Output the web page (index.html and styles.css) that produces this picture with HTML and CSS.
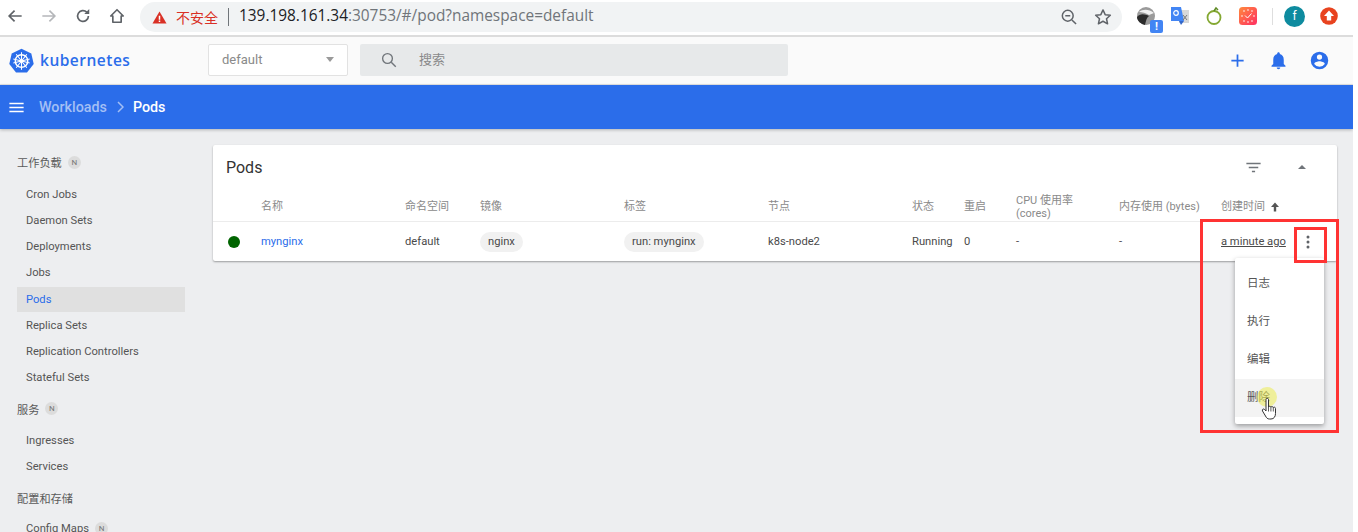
FILE: index.html
```html
<!DOCTYPE html>
<html lang="zh">
<head>
    <meta charset="UTF-8">
    <title>Pods - Kubernetes Dashboard</title>
    <link rel="stylesheet" href="styles.css">
</head>
<body>
    <div class="browser-bar">
        <div class="nav-btns">
            <svg class="nav-icon" viewBox="0 0 24 24"><path d="M20 12H5M11.5 5.5 5 12l6.500 6.500" fill="none" stroke="#5f6368" stroke-width="2"/></svg>
            <svg class="nav-icon" viewBox="0 0 24 24"><path d="M4 12h15M12.500 5.500 19 12l-6.500 6.500" fill="none" stroke="#b5b7ba" stroke-width="2"/></svg>
            <svg class="nav-icon" viewBox="0 0 24 24"><path d="M18.500 12a6.500 6.500 0 1 1-2-4.700" fill="none" stroke="#5f6368" stroke-width="2"/><path d="M19.500 3.500v6h-6z" fill="#5f6368"/></svg>
            <svg class="nav-icon" viewBox="0 0 24 24"><path d="M12 4.500 4.500 12H7v7.500h10V12h2.500z" fill="none" stroke="#5f6368" stroke-width="2" stroke-linejoin="round"/></svg>
        </div>
        <div class="address">
            <svg class="warn" viewBox="0 0 16 16"><path d="M8 1.500 15.500 14.500H.5z" fill="#d93025"/><path d="M7.200 6h1.600v4.500H7.200zM7.200 11.200h1.600v1.500H7.200z" fill="#fff"/></svg>
            <span class="insecure">不安全</span>
            <span class="addr-sep"></span>
            <span class="url"><b>139.198.161.34</b>:30753/#/pod?namespace=default</span>
            <span class="addr-end">
                <svg class="addr-icon" viewBox="0 0 24 24"><circle cx="10.500" cy="10.500" r="6.500" fill="none" stroke="#5f6368" stroke-width="1.800"/><path d="M7.500 10.500h6M15.500 15.500l5 5" stroke="#5f6368" stroke-width="1.800" fill="none"/></svg>
                <svg class="addr-icon" viewBox="0 0 24 24"><path d="m12 3.500 2.600 5.700 6.200.7-4.600 4.200 1.300 6.100-5.500-3.100-5.500 3.100 1.300-6.100L3.200 9.900l6.200-.7z" fill="none" stroke="#5f6368" stroke-width="1.800" stroke-linejoin="round"/></svg>
            </span>
        </div>
        <div class="extensions">
            <span class="ext ext-eagle">
                <svg viewBox="0 0 20 20"><circle cx="10" cy="10" r="9" fill="#9a9a9a"/><path d="M1 11C4 7 9 8 13 10c-2 1-3 4-4 9-4-1-8-4-8-8z" fill="#2b2b2b"/><path d="M3 6c4-3 10-3 15 1l-5 2C10 7 6 6 3 6z" fill="#f0f0f0"/></svg>
                <span class="ext-badge">!</span>
            </span>
            <span class="ext">
                <svg viewBox="0 0 20 20"><path d="M9 4h10v13H9z" fill="#d8d8d8"/><path d="M1 1h10l3 14H1z" fill="#4285f4"/><path d="m9 15 2 4 3-4z" fill="#3367c9"/><circle cx="6" cy="7" r="2.300" fill="none" stroke="#fff" stroke-width="1.200"/><path d="m13 9 4 5M17 9l-4 5" stroke="#777" stroke-width="1"/></svg>
            </span>
            <span class="ext">
                <svg viewBox="0 0 20 20"><circle cx="10" cy="11.500" r="6.500" fill="none" stroke="#84a832" stroke-width="1.800"/><path d="M10 5l2-3 2 2" fill="none" stroke="#5e8a24" stroke-width="1.500"/></svg>
            </span>
            <span class="ext">
                <svg viewBox="0 0 20 20"><defs><linearGradient id="clockFill" x1="0" y1="0" x2="1" y2="1"><stop offset="0" stop-color="#ff8a3c"/><stop offset="1" stop-color="#ff2e63"/></linearGradient></defs><rect x="1" y="1" width="18" height="18" rx="3.500" fill="url(#clockFill)"/><path d="m7 9.500 2.500 2.500 4-4.500" fill="none" stroke="#fff" stroke-width="1"/><circle cx="4" cy="10" r=".8" fill="#fff"/><circle cx="16" cy="10" r=".8" fill="#fff"/><circle cx="10" cy="16" r=".8" fill="#fff"/><circle cx="10" cy="4" r=".8" fill="#fff"/><circle cx="6" cy="15" r=".8" fill="#fff"/><circle cx="14" cy="15" r=".8" fill="#fff"/><circle cx="6" cy="5" r=".8" fill="#fff"/><circle cx="14" cy="5" r=".8" fill="#fff"/></svg>
            </span>
            <span class="ext-sep"></span>
            <span class="avatar">f</span>
            <span class="ext">
                <svg viewBox="0 0 20 20"><circle cx="10" cy="10" r="8.800" fill="#e8431f"/><path d="M10 4.500 15 10h-2.800v4.500H7.800V10H5z" fill="#fff"/></svg>
            </span>
        </div>
    </div>

    <header class="top-bar">
        <div class="brand">
            <svg class="brand-logo" viewBox="0 0 26 26">
                <path d="M13 .8 23.200 5.700 25.700 16.700 18.700 25.400H7.300L.3 16.700 2.800 5.700z" fill="#2b6dea"/>
                <circle cx="13" cy="13.500" r="6.500" fill="none" stroke="#fff" stroke-width="1.500"/>
                <path d="M13 4.500v18M4.500 11.500l17 4M21.500 11.500l-17 4M7.500 6.500l11 14M18.500 6.500l-11 14" stroke="#fff" stroke-width="1.100"/>
                <circle cx="13" cy="13.500" r="1.700" fill="#fff"/>
            </svg>
            <span class="brand-name">kubernetes</span>
        </div>
        <div class="ns-select">
            <span>default</span>
            <i class="ns-caret"></i>
        </div>
        <div class="search">
            <svg class="search-icon" viewBox="0 0 24 24"><circle cx="10" cy="10" r="6.500" fill="none" stroke="#70757a" stroke-width="1.800"/><path d="m15 15 6 6" stroke="#70757a" stroke-width="1.800"/></svg>
            <span>搜索</span>
        </div>
        <div class="top-actions">
            <svg class="top-icon" viewBox="0 0 24 24"><path d="M19 13h-6v6h-2v-6H5v-2h6V5h2v6h6z" fill="#2b6dea"/></svg>
            <svg class="top-icon" viewBox="0 0 24 24"><path d="M12 22c1.100 0 2-.9 2-2h-4c0 1.100.9 2 2 2zm6-6v-5c0-3.100-1.600-5.600-4.500-6.300V4c0-.8-.7-1.500-1.500-1.500s-1.500.7-1.500 1.500v.7C7.600 5.400 6 7.900 6 11v5l-2 2v1h16v-1z" fill="#2b6dea"/></svg>
            <svg class="top-icon" viewBox="0 0 24 24"><path d="M12 2a10 10 0 1 0 0 20 10 10 0 0 0 0-20zm0 3a3 3 0 1 1 0 6 3 3 0 0 1 0-6zm0 14.200a7.200 7.200 0 0 1-6-3.200c0-2 4-3.100 6-3.100s6 1.100 6 3.100a7.200 7.200 0 0 1-6 3.200z" fill="#2b6dea"/></svg>
        </div>
    </header>

    <div class="crumb-bar">
        <svg class="menu-icon" viewBox="0 0 24 24"><path d="M3 18h18v-2H3zm0-5h18v-2H3zm0-7v2h18V6z" fill="#fff"/></svg>
        <span class="crumb-link">Workloads</span>
        <svg class="crumb-arrow" viewBox="0 0 7 12"><path d="m1 1 5 5-5 5" fill="none" stroke="#a3bff5" stroke-width="1.500"/></svg>
        <span class="crumb-current">Pods</span>
    </div>

    <div class="page">
        <nav class="sidebar">
            <div class="nav-group">工作负载 <span class="n-badge">N</span></div>
            <a class="nav-item">Cron Jobs</a>
            <a class="nav-item">Daemon Sets</a>
            <a class="nav-item">Deployments</a>
            <a class="nav-item">Jobs</a>
            <a class="nav-item active">Pods</a>
            <a class="nav-item">Replica Sets</a>
            <a class="nav-item">Replication Controllers</a>
            <a class="nav-item">Stateful Sets</a>
            <div class="nav-group">服务 <span class="n-badge">N</span></div>
            <a class="nav-item">Ingresses</a>
            <a class="nav-item">Services</a>
            <div class="nav-group">配置和存储</div>
            <a class="nav-item">Config Maps <span class="n-badge">N</span></a>
        </nav>

        <main class="content">
            <section class="card">
                <div class="card-head">
                    <h2>Pods</h2>
                    <div class="card-tools">
                        <svg class="filter-icon" viewBox="0 0 24 24"><path d="M3 6h18v2H3zm3 5h12v2H6zm4 5h4v2h-4z" fill="#70757a"/></svg>
                        <i class="collapse-caret"></i>
                    </div>
                </div>
                <div class="grid grid-head">
                    <span></span>
                    <span>名称</span>
                    <span>命名空间</span>
                    <span>镜像</span>
                    <span>标签</span>
                    <span>节点</span>
                    <span>状态</span>
                    <span>重启</span>
                    <span>CPU 使用率<br>(cores)</span>
                    <span>内存使用 (bytes)</span>
                    <span class="sorted">创建时间<svg class="sort-arrow" viewBox="0 0 10 10"><path d="M5 .5 9 5H6.200v4.500H3.800V5H1z" fill="#555"/></svg></span>
                </div>
                <div class="grid grid-row">
                    <span><i class="status-dot"></i></span>
                    <a class="pod-link">mynginx</a>
                    <span>default</span>
                    <span><em class="chip">nginx</em></span>
                    <span><em class="chip">run: mynginx</em></span>
                    <span>k8s-node2</span>
                    <span>Running</span>
                    <span>0</span>
                    <span>-</span>
                    <span>-</span>
                    <span class="age">a minute ago</span>
                    <svg class="more-icon" viewBox="0 0 24 24"><circle cx="12" cy="6" r="1.800" fill="#5f6368"/><circle cx="12" cy="12" r="1.800" fill="#5f6368"/><circle cx="12" cy="18" r="1.800" fill="#5f6368"/></svg>
                </div>
            </section>
        </main>

        <div class="row-menu">
            <div class="menu-item">日志</div>
            <div class="menu-item">执行</div>
            <div class="menu-item">编辑</div>
            <div class="menu-item hover">删除</div>
        </div>
        <span class="mark mark-outer"></span>
        <span class="mark mark-inner"></span>
        <span class="cursor-glow"></span>
        <svg class="hand" viewBox="0 0 18 24"><path d="M5 2.500c0-1.600 2.500-1.600 2.500 0V10c0-1 2.300-1 2.400.3 0-1 2.300-1 2.400.4 .2-.9 2.200-.7 2.200.8v5c0 3-1.500 5.500-4.500 5.500H8.500c-2 0-3-1-4-3L1.500 14c-.8-1.500 1-2.800 2.200-1.500L5 14z" fill="#fff" stroke="#333" stroke-width="1" stroke-linejoin="round"/><path d="M7.500 10v4.500M9.900 10.500v4M12.300 11v3.500" stroke="#333" stroke-width=".8"/></svg>
    </div>
</body>
</html>
```

FILE: styles.css
```css
* {
    box-sizing: border-box;
}
html, body {
    height: 100%;
}
body {
    margin: 0;
    width: 1353px;
    height: 532px;
    overflow: hidden;
    display: flex;
    flex-direction: column;
    font-family: Roboto, "Noto Sans CJK SC", sans-serif;
    font-size: 11.200px;
    color: #4a4a4a;
    background-color: #edeef0;
}
html {
    background-color: #fff;
    overflow: hidden;
}

/* browser chrome */
.browser-bar {
    height: 37px;
    flex: none;
    display: flex;
    align-items: flex-start;
    background-color: #fff;
    border-bottom: 2px solid #dcdcdc;
}
.nav-btns {
    width: 140px;
    height: 32px;
    display: flex;
    align-items: center;
    gap: 14px;
    padding-left: 5px;
}
.nav-icon {
    width: 20px;
    height: 20px;
}
.address {
    width: 982px;
    height: 30px;
    margin-top: 2px;
    padding: 0 9px 0 12px;
    display: flex;
    align-items: center;
    border-radius: 15px;
    background-color: #f1f3f4;
}
.warn {
    width: 15px;
    height: 15px;
}
.insecure {
    margin-left: 9px;
    font-size: 14px;
    color: #d93025;
}
.addr-sep {
    width: 1px;
    height: 18px;
    margin: 0 10px;
    background-color: #70757a;
}
.url {
    font-family: "Open Sans", sans-serif;
    font-size: 15.400px;
    line-height: 26px;
    padding-bottom: 2px;
    color: #70757a;
}
.url b {
    font-weight: 400;
    color: #202124;
}
.addr-end {
    margin-left: auto;
    display: flex;
    gap: 14px;
}
.addr-icon {
    width: 20px;
    height: 20px;
}
.extensions {
    height: 32px;
    display: flex;
    align-items: center;
    padding-left: 14px;
    gap: 14px;
}
.ext {
    width: 20px;
    height: 20px;
    position: relative;
}
.ext svg {
    display: block;
    width: 20px;
    height: 20px;
}
.ext-badge {
    position: absolute;
    right: -7px;
    bottom: -7px;
    width: 13px;
    height: 13px;
    border-radius: 2px;
    background-color: #4285f4;
    color: #fff;
    font-size: 11px;
    font-weight: 700;
    line-height: 13px;
    text-align: center;
}
.ext-sep {
    width: 1px;
    height: 17px;
    background-color: #dedede;
}
.avatar {
    width: 21px;
    height: 21px;
    margin-left: -3px;
    border-radius: 50%;
    background-color: #0e8b9f;
    color: #fff;
    font-size: 12px;
    line-height: 21px;
    text-align: center;
}

/* dashboard top bar */
.top-bar {
    height: 48px;
    flex: none;
    padding-bottom: 1px;
    display: flex;
    align-items: center;
    background-color: #fafafa;
    border-bottom: 1px solid #e4e4e4;
}
.brand {
    width: 208px;
    display: flex;
    align-items: center;
    padding-left: 9px;
}
.brand-logo {
    width: 25px;
    height: 25px;
}
.brand-name {
    margin-left: 6px;
    font-family: "Open Sans", sans-serif;
    font-size: 15.500px;
    font-weight: 600;
    letter-spacing: .5px;
    color: #2b6dea;
}
.ns-select {
    width: 140px;
    height: 32px;
    padding: 0 13px 1px;
    display: flex;
    align-items: center;
    justify-content: space-between;
    background-color: #fff;
    border: 1px solid #e2e2e2;
    border-radius: 2px;
    color: #8a8a8a;
    font-size: 13px;
}
.ns-caret {
    width: 0;
    height: 0;
    border-left: 4.500px solid transparent;
    border-right: 4.500px solid transparent;
    border-top: 5px solid #9a9a9a;
}
.search {
    width: 428px;
    height: 32px;
    margin-left: 12px;
    padding-left: 20px;
    display: flex;
    align-items: center;
    gap: 21px;
    background-color: #e7e9ea;
    border-radius: 2px;
    color: #8a8a8a;
    font-size: 13px;
}
.search span {
    margin-bottom: 4px;
}
.search-icon {
    width: 18px;
    height: 18px;
}
.top-actions {
    margin-left: auto;
    padding-right: 23px;
    display: flex;
    gap: 20px;
}
.top-icon {
    width: 21px;
    height: 21px;
}

/* breadcrumb */
.crumb-bar {
    height: 44px;
    flex: none;
    display: flex;
    align-items: center;
    padding-left: 7px;
    background-color: #2b6dea;
    box-shadow: 0 1px 3px rgba(0, 0, 0, .25);
    font-size: 14.300px;
    font-weight: 500;
    color: #fff;
    position: relative;
}
.menu-icon {
    width: 19px;
    height: 19px;
}
.crumb-link {
    margin-left: 13px;
    color: #a3bff5;
}
.crumb-arrow {
    width: 7px;
    height: 12px;
    margin: 0 9px 0 10px;
}

/* page */
.page {
    flex: 1;
    min-height: 0;
    display: flex;
    position: relative;
}
.sidebar {
    width: 213px;
    flex: none;
    padding: 20px 28px 0 17px;
}
.nav-group {
    height: 26px;
    display: flex;
    align-items: center;
    gap: 6px;
    color: #5a5a5a;
    margin-bottom: 6px;
}
.nav-group:last-of-type {
    margin-bottom: 5px;
}
.nav-item {
    height: 26.200px;
    padding-left: 9px;
    display: flex;
    align-items: center;
    gap: 6px;
    color: #555;
}
.nav-item.active {
    height: 25px;
    margin-top: 1px;
    margin-bottom: .200px;
    background-color: #e0e0e0;
    color: #2b6dea;
}
.nav-item + .nav-group {
    margin-top: 5px;
}
.n-badge {
    width: 13px;
    height: 13px;
    border-radius: 50%;
    background-color: #dcdcdc;
    color: #777;
    font-size: 8px;
    line-height: 13px;
    text-align: center;
}
.content {
    flex: 1;
    min-width: 0;
    padding: 16px 16px 0 0;
}
.card {
    background-color: #fff;
    border-radius: 2px;
    box-shadow: 0 1px 2px rgba(0, 0, 0, .35);
}
.card-head {
    height: 44px;
    padding-left: 13px;
    display: flex;
    align-items: center;
    justify-content: space-between;
}
.card-head h2 {
    margin: 0;
    font-size: 16px;
    font-weight: 400;
    color: #333;
}
.card-tools {
    display: flex;
    align-items: center;
    gap: 35px;
    padding-right: 31px;
}
.filter-icon {
    width: 19px;
    height: 19px;
}
.collapse-caret {
    width: 0;
    height: 0;
    border-left: 4px solid transparent;
    border-right: 4px solid transparent;
    border-bottom: 4px solid #70757a;
}
.grid {
    display: grid;
    grid-template-columns: 48px 144px 75px 144px 144px 144px 52px 52px 103px 102px 82px 1fr;
    align-items: center;
}
.grid-head {
    height: 33px;
    padding-top: 4px;
    color: #8a8a8a;
    font-size: 11px;
    line-height: 13.500px;
    border-bottom: 1px solid #ececec;
}
.sorted {
    display: flex;
    align-items: center;
    gap: 5px;
}
.sort-arrow {
    width: 10px;
    height: 10px;
}
.grid-row {
    height: 39px;
    color: #4a4a4a;
}
.status-dot {
    display: block;
    width: 12px;
    height: 12px;
    margin-left: 15px;
    border-radius: 50%;
    background-color: #006400;
}
.pod-link {
    color: #2b6dea;
}
.chip {
    display: inline-block;
    height: 20px;
    padding: 0 8px;
    border-radius: 10px;
    background-color: #f1f1f1;
    font-style: normal;
    line-height: 20px;
}
.age {
    text-decoration: underline;
    white-space: nowrap;
}
.more-icon {
    width: 20px;
    height: 20px;
    margin-left: -5px;
}

/* row actions menu, open over the page */
.row-menu {
    position: absolute;
    left: 1235px;
    top: 129px;
    width: 89px;
    padding: 7px 0;
    background-color: #fff;
    border-radius: 2px;
    box-shadow: 0 2px 5px rgba(0, 0, 0, .35);
}
.menu-item {
    height: 38px;
    padding-left: 12px;
    padding-bottom: 4px;
    display: flex;
    align-items: center;
    color: #555;
    font-size: 11.500px;
}
.menu-item.hover {
    background-color: #f3f3f3;
}
.mark {
    position: absolute;
    border: 3px solid #ff3333;
}
.mark-outer {
    left: 1200px;
    top: 90px;
    width: 139px;
    height: 214px;
}
.mark-inner {
    left: 1294px;
    top: 98px;
    width: 33px;
    height: 36px;
}
.cursor-glow {
    position: absolute;
    left: 1257px;
    top: 258px;
    width: 20px;
    height: 20px;
    border-radius: 50%;
    background-color: rgba(235, 235, 80, .55);
}
.hand {
    position: absolute;
    left: 1261px;
    top: 268px;
    width: 18px;
    height: 24px;
}
```
